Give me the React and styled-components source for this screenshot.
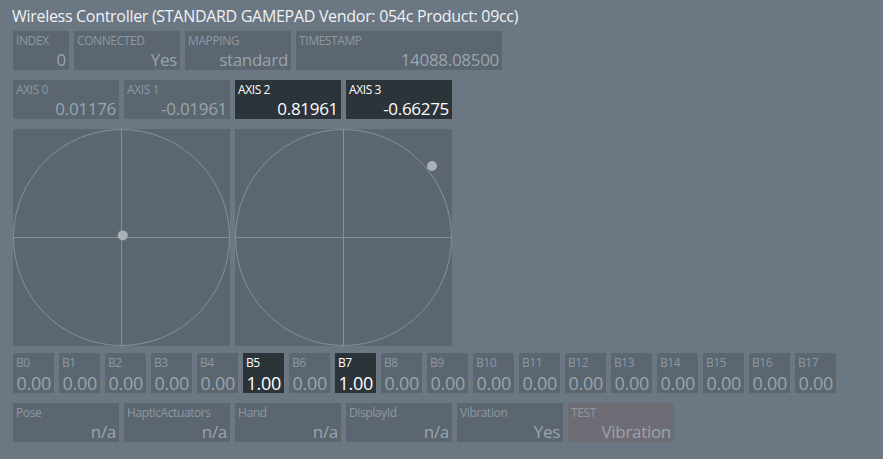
import React from "react"
import styled, { createGlobalStyle } from "styled-components"

const Global = createGlobalStyle`
    body {
        margin: 0;
        background: #6b7783;
        font-family: "Open Sans", "Noto Sans", sans-serif;
    }
`

const Page = styled.div`
    padding: 6px 13px;
    display: flex;
    flex-direction: column;
    gap: 10px;
`

const Title = styled.div`
    color: #f0f2f4;
    font-size: 16px;
    line-height: 20px;
    margin-left: -1px;
    margin-bottom: -5px;
    letter-spacing: -0.3px;
`

const Row = styled.div`
    display: flex;
    gap: 5px;
`

const Box = styled.div`
    width: ${(p) => p.w}px;
    height: ${(p) => p.h || 39}px;
    box-sizing: border-box;
    background: ${(p) => (p.on ? "#2c3339" : p.test ? "#6e6c74" : "#5b6670")};
    display: flex;
    flex-direction: column;
    justify-content: space-between;
    padding: 3px 3px 0 3px;
`

const Label = styled.div`
    font-size: 12px;
    line-height: 14px;
    color: ${(p) => (p.on ? "#ffffff" : "#8d98a2")};
    letter-spacing: -0.4px;
`

const Value = styled.div`
    text-align: right;
    font-size: ${(p) => p.size || 17}px;
    line-height: 20px;
    color: ${(p) => (p.on ? "#ffffff" : "#9aa4ad")};
    letter-spacing: -0.3px;
`

const Stick = styled.svg`
    display: block;
    background: #5b6670;
`

const Field = ({ label, value, w, h, on, test, size }) => (
    <Box w={w} h={h} on={on} test={test}>
        <Label on={on}>{label}</Label>
        <Value on={on} size={size}>{value}</Value>
    </Box>
)

const StickView = ({ x, y }) => {
    const s = 217
    const c = s / 2
    const r = 108
    return (
        <Stick width={s} height={s}>
            <circle cx={c} cy={c} r={r} fill="none" stroke="#86909a" strokeWidth="1" />
            <line x1={c} y1="0" x2={c} y2={s} stroke="#86909a" strokeWidth="1" />
            <line x1="0" y1={c} x2={s} y2={c} stroke="#86909a" strokeWidth="1" />
            <circle cx={c + x * r} cy={c + y * r} r="5" fill="#a8b0b8" />
        </Stick>
    )
}

const axes = [0.01176, -0.01961, 0.81961, -0.66275]

const buttons = Array.from({ length: 18 }, (_, i) => (i === 5 || i === 7 ? 1 : 0))

const extras = [
    ["Pose", "n/a"],
    ["HapticActuators", "n/a"],
    ["Hand", "n/a"],
    ["DisplayId", "n/a"],
    ["Vibration", "Yes"],
]

export default function App() {
    return (
        <>
            <Global />
            <Page>
                <Title>Wireless Controller (STANDARD GAMEPAD Vendor: 054c Product: 09cc)</Title>
                <Row>
                    <Field label="INDEX" value="0" w={56} />
                    <Field label="CONNECTED" value="Yes" w={106} />
                    <Field label="MAPPING" value="standard" w={106} />
                    <Field label="TIMESTAMP" value="14088.08500" w={206} />
                </Row>
                <Row>
                    {axes.map((a, i) => (
                        <Field key={i} label={`AXIS ${i}`} value={a.toFixed(5)} w={106} on={i >= 2} />
                    ))}
                </Row>
                <Row>
                    <StickView x={axes[0]} y={axes[1]} />
                    <StickView x={axes[2]} y={axes[3]} />
                </Row>
                <Row style={{ marginTop: -3 }}>
                    {buttons.map((b, i) => (
                        <Field key={i} label={`B${i}`} value={b.toFixed(2)} w={41} h={40} on={b > 0} size={18} />
                    ))}
                </Row>
                <Row>
                    {extras.map(([l, v]) => (
                        <Field key={l} label={l} value={v} w={106} />
                    ))}
                    <Field label="TEST" value="Vibration" w={106} test />
                </Row>
            </Page>
        </>
    )
}
